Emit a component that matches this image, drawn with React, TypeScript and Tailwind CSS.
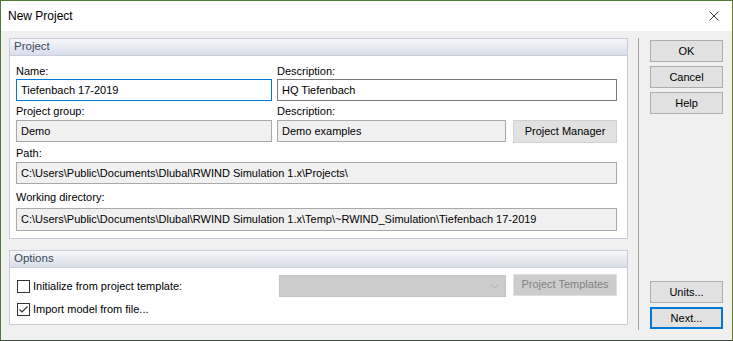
import React from 'react';
import { X, ChevronDown } from 'lucide-react';

const font = { fontFamily: '"Segoe UI", "Liberation Sans", Arial, sans-serif' };

function Field({ value, focused, readOnly, className = '' }: { value: string; focused?: boolean; readOnly?: boolean; className?: string }) {
  return (
    <div
      className={`h-[22px] flex items-center px-[4px] text-[11px] text-black whitespace-nowrap overflow-hidden border ${
        focused ? 'border-[#0078d7] bg-white' : readOnly ? 'border-[#a9a9a9] bg-[#f0f0f0]' : 'border-[#7a7a7a] bg-white'
      } ${className}`}
    >
      {value}
    </div>
  );
}

function Btn({ label, disabled, def, className = '' }: { label: string; disabled?: boolean; def?: boolean; className?: string }) {
  return (
    <div
      className={`h-[22px] flex items-center justify-center text-[11px] ${
        def ? 'border-2 border-[#0078d7] bg-[#e1e1e1] text-black' : disabled ? 'border border-[#e0e0e0] bg-[#cccccc] text-[#838383]' : 'border border-[#adadad] bg-[#e1e1e1] text-black'
      } ${className}`}
    >
      {label}
    </div>
  );
}

function GroupBox({ title, children }: { title: string; children: React.ReactNode }) {
  return (
    <div className="border border-[#c5ccd6] bg-white">
      <div className="h-[17px] flex items-center px-[4px] text-[11.5px] text-[#3b4a5e] bg-gradient-to-b from-[#f6f7fa] to-[#d9dde7] border-b border-[#c9ced8]">
        {title}
      </div>
      {children}
    </div>
  );
}

function Check({ checked }: { checked?: boolean }) {
  return (
    <div className="w-[13px] h-[13px] border border-[#333333] bg-white flex items-center justify-center">
      {checked && (
        <svg width="11" height="11" viewBox="0 0 11 11">
          <path d="M1.5 5.5 L4 8 L9.5 2.5" fill="none" stroke="#333" strokeWidth="1.2" />
        </svg>
      )}
    </div>
  );
}

export default function App() {
  return (
    <div style={font} className="w-[733px] h-[341px] flex flex-col bg-[#f0f0f0] border border-[#4f7a36] border-r-[#6b7a26] border-b-[#3f4b40] overflow-hidden">
      {/* Title bar */}
      <div className="h-[30px] bg-white flex items-center justify-between pl-[7px] pr-[10px] shrink-0">
        <span className="text-[12px] text-black">New Project</span>
        <X size={16} strokeWidth={1.2} className="text-black" />
      </div>

      <div className="flex flex-1 pt-[7px] pl-[8px]">
        {/* Left side */}
        <div className="w-[619px] flex flex-col">
          <GroupBox title="Project">
            <div className="px-[6px] pr-[10px] pt-[7px] pb-[7px] text-[11px] text-black">
              <div className="grid grid-cols-[256px_340px] gap-x-[5px]">
                <div className="h-[16px] leading-[16px]">Name:</div>
                <div className="h-[16px] leading-[16px]">Description:</div>
                <Field value="Tiefenbach 17-2019" focused />
                <Field value="HQ Tiefenbach" />
                <div className="h-[17px] leading-[17px] mt-[2px]">Project group:</div>
                <div className="h-[17px] leading-[17px] mt-[2px]">Description:</div>
                <Field value="Demo" readOnly />
                <div className="flex gap-[7px]">
                  <Field value="Demo examples" readOnly className="w-[229px]" />
                  <Btn label="Project Manager" className="w-[104px] h-[23px] border-[#d0d0d0]" />
                </div>
              </div>
              <div className="h-[17px] leading-[17px] mt-[2px]">Path:</div>
              <Field value="C:\Users\Public\Documents\Dlubal\RWIND Simulation 1.x\Projects\" readOnly className="w-[601px]" />
              <div className="h-[17px] leading-[17px] mt-[5px] mb-[2px]">Working directory:</div>
              <Field value="C:\Users\Public\Documents\Dlubal\RWIND Simulation 1.x\Temp\~RWIND_Simulation\Tiefenbach 17-2019" readOnly className="w-[601px] h-[23px]" />
            </div>
          </GroupBox>

          <div className="mt-[11px]">
            <GroupBox title="Options">
              <div className="pl-[7px] pr-[10px] pt-[7px] pb-[4px] text-[11px] text-black">
                <div className="flex items-center h-[22px]">
                  <div className="flex items-center gap-[3px] w-[262px]">
                    <Check />
                    <span>Initialize from project template:</span>
                  </div>
                  <div className="w-[227px] h-[22px] bg-[#cccccc] border border-[#c4c4c4] flex items-center justify-end pr-[4px]">
                    <ChevronDown size={13} strokeWidth={1} className="text-[#9a9a9a]" />
                  </div>
                  <Btn label="Project Templates" disabled className="w-[104px] ml-[7px] -mt-[3px]" />
                </div>
                <div className="flex items-center gap-[3px] h-[22px] mt-[1px]">
                  <Check checked />
                  <span>Import model from file...</span>
                </div>
              </div>
            </GroupBox>
          </div>
        </div>

        {/* Separator */}
        <div className="w-px bg-[#a0a0a0] ml-[10px] mb-[10px]" />

        {/* Right buttons */}
        <div className="w-[73px] ml-[11px] flex flex-col pt-[2px] pb-[11px]">
          <div className="flex flex-col gap-[4px]">
            <Btn label="OK" />
            <Btn label="Cancel" />
            <Btn label="Help" />
          </div>
          <div className="mt-auto flex flex-col gap-[4px]">
            <Btn label="Units..." />
            <Btn label="Next..." def />
          </div>
        </div>
      </div>
    </div>
  );
}
